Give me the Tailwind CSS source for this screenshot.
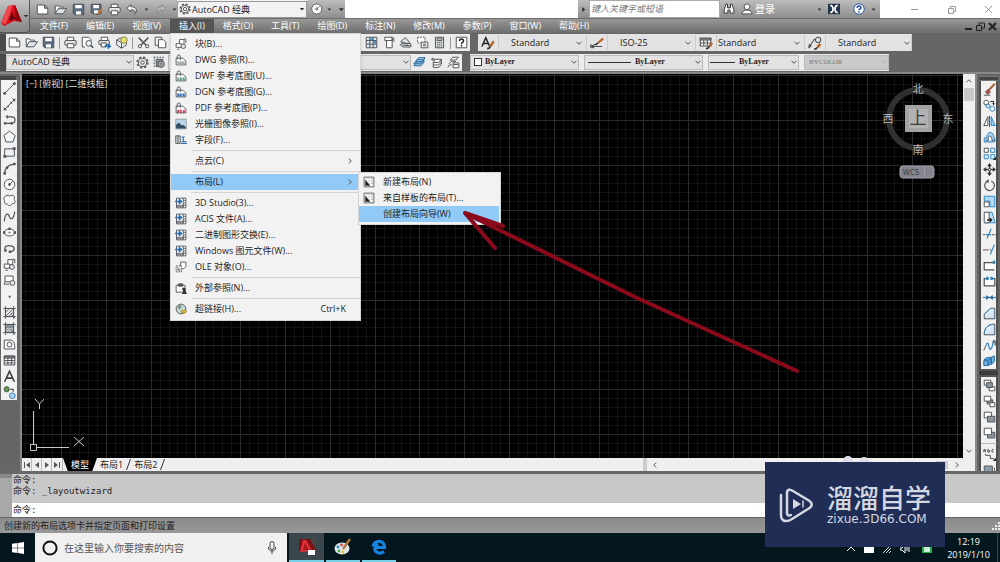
<!DOCTYPE html>
<html lang="zh-CN">
<head>
<meta charset="utf-8">
<meta name="viewport" content="width=device-width, initial-scale=1">
<title>AutoCAD 经典</title>
<script src="https://cdn.jsdelivr.net/npm/@tailwindcss/browser@4"></script>
</head>
<body class="h-screen overflow-hidden bg-[#666] font-['Open_Sans','Noto_Sans_CJK_SC',sans-serif] text-[9px] leading-4 text-[#222] [&_svg:has(use)]:fill-none [&_svg:has(use)]:stroke-[#505357] [&_svg:has(use)]:[stroke-width:1.2]">

<svg class="absolute size-0" aria-hidden="true">
  <defs>
    <linearGradient id="blueFade" x1="0" y1="0" x2="1" y2="1"><stop offset="0" stop-color="#fff"/><stop offset="1" stop-color="#b5d8f0"/></linearGradient>
  <!-- files -->
  <symbol id="new" viewBox="0 0 16 16"><path fill="#fff" d="M1.500 2.500h9l4 4v7h-13zM10.500 2.500v4h4"/></symbol>
  <symbol id="open" viewBox="0 0 16 16"><path fill="#fff" d="M1.500 13V3.500h4l1 1.500h5v2"/><path fill="#dde5ea" d="M1.500 13.300l3.500-6.300h10.500l-4.500 6.300z"/></symbol>
  <symbol id="save" viewBox="0 0 16 16"><path fill="#5b6b80" d="M1.500 1.500h13v13h-11l-2-2z"/><path fill="#fff" stroke="none" d="M4 2.500h8v4H4zM5 10h6v4H5z"/></symbol>
  <symbol id="saveas" viewBox="0 0 16 16"><path fill="#5b6b80" d="M1.500 1.500h12v12h-10l-2-2z"/><path fill="#fff" stroke="none" d="M4 2.500h7v4H4zM5 9h5v4H5z"/><path stroke="#c9782a" stroke-width="2.600" d="M14.500 7.500l-5 6"/><path stroke="#222" d="M9 14.500l.5-1"/></symbol>
  <symbol id="print" viewBox="0 0 16 16"><path fill="#fff" d="M4 6V1.500h8V6"/><rect x="1" y="5.500" width="14" height="6" rx="1.500" fill="#e3e3e3"/><path fill="#fff" d="M4 9.500h8v5H4z"/></symbol>
  <symbol id="preview" viewBox="0 0 16 16"><path fill="#fff" d="M5 13.500H1.500v-12h8l3 3V6"/><circle cx="9.500" cy="9" r="3.500" fill="#eef6fb"/><path stroke-width="2" d="M12 11.500l3 3"/></symbol>
  <symbol id="publish" viewBox="0 0 16 16"><path fill="#fff" d="M4 6V1.500h8V6"/><rect x="1" y="5.500" width="13" height="5" rx="1" fill="#e3e3e3"/><path fill="#fff" d="M4 8.500h6v5H4z"/><path stroke="#2576b8" stroke-width="2" d="M8 12.500h6M12 9.500l3 3-3 3"/></symbol>
  <symbol id="cube" viewBox="0 0 16 16"><path fill="#e9f1f6" d="M2 5l6-3 6 3v6l-6 4-6-4zM2 5l6 3 6-3M8 8v7"/><circle cx="11" cy="5" r="4" fill="#e8e06c" stroke="#8a8a50"/></symbol>
  <symbol id="cut" viewBox="0 0 16 16"><path stroke-width="1.800" d="M2 2l9 9M14 2L5 11"/><circle cx="3.500" cy="12.500" r="2"/><circle cx="12.500" cy="12.500" r="2"/></symbol>
  <symbol id="copydoc" viewBox="0 0 16 16"><path fill="#f6f6f6" d="M1.500 1.500h8v10h-8z"/><path fill="#fff" d="M5.500 4.500h6l3 3v7h-9z"/></symbol>
  <symbol id="undo" viewBox="0 0 16 16"><path fill="#f4f4f4" d="M6 2L1 6.500 6 11V8.500c4-.5 6 1 5 5 4-5 1-9-5-9z"/></symbol>
  <symbol id="redo" viewBox="0 0 16 16"><path fill="#b9b9b9" stroke="#8a8a8a" d="M10 2l5 4.500L10 11V8.500c-4-.5-6 1-5 5-4-5-1-9 5-9z"/></symbol>
  <symbol id="tri" viewBox="0 0 16 16"><path fill="#333" stroke="none" d="M2 5h12l-6 7z"/></symbol>
  <symbol id="gear" viewBox="0 0 16 16"><circle cx="8" cy="8" r="6.500" stroke-width="2" stroke-dasharray="2.800 2.300"/><circle cx="8" cy="8" r="5"/><circle cx="8" cy="8" r="2.200"/></symbol>
  <symbol id="wsset" viewBox="0 0 16 16"><path stroke-dasharray="2 1.500" d="M1 1.500h14M1.500 1v14"/><rect x="4" y="4" width="8" height="9" fill="#8a939a"/><circle cx="10" cy="10" r="4" fill="#a8b0b5"/><circle cx="10" cy="10" r="1.300" fill="#fff"/></symbol>
  <symbol id="gauge" viewBox="0 0 16 16"><circle cx="8" cy="8" r="7" fill="#fff"/><circle cx="8" cy="8" r="1.500"/><path d="M8 8l4-4"/></symbol>
  <symbol id="palette" viewBox="0 0 16 16"><path fill="#dce9f2" d="M1.500 1.500h13v13h-13zM6 1.500v13M10 1.500v13M1.500 5.500h13M1.500 10h13"/><path fill="#4a8fc0" stroke="none" d="M6.500 2h3v3h-3zM10.500 6h3v3.500h-3z"/></symbol>
  <symbol id="toolpal" viewBox="0 0 16 16"><path fill="#fff" d="M3.500 1.500h9v13h-7v-9h-2zM12.500 1.500v4h-7"/><path d="M14.500 2v5"/></symbol>
  <symbol id="sheet" viewBox="0 0 16 16"><path fill="#dfe5e8" d="M2 7l6-5 5 6-3 2zM1.500 10.500l4-2 9 1v4h-10z"/><path d="M4 11l9 1"/></symbol>
  <symbol id="markup" viewBox="0 0 16 16"><path fill="#fff" stroke-dasharray="2 1.300" d="M2 1.500h9v7H2z"/><path fill="#fff" d="M6.500 7.500h8v7h-8zM8.500 10h4M8.500 12h4"/></symbol>
  <symbol id="calc" viewBox="0 0 16 16"><path fill="#d7dcdf" d="M3 1.500h10v13H3z"/><path fill="#fff" d="M5 3.500h6v2H5z"/><path stroke-dasharray="1.500 1" d="M5 8h6M5 10.200h6M5 12.400h6"/></symbol>
  <symbol id="help" viewBox="0 0 16 16"><path fill="#fff" d="M1.500 1.500h13v13h-13z"/><path stroke="#222" stroke-width="1.800" d="M5.500 6c0-3 5-3 5 0 0 2-2.500 1.800-2.500 4M8 11.200v1.800"/></symbol>
  <symbol id="layers" viewBox="0 0 16 16"><path fill="#9cc8e6" stroke="#2f6f9e" d="M1 12l4-5h9l-4 5zM1 9.500l4-5h9l-4 5zM3 7l4-5h8l-4 5z"/></symbol>
  <symbol id="layprev" viewBox="0 0 16 16"><path d="M1 4h5M3.500 2v4"/><path fill="#fff" d="M4 8l3-4h7l-3 4zM4 8v3h7l3-4M4 11v3h7l3-4V4"/></symbol>
  <symbol id="laystate" viewBox="0 0 16 16"><path fill="#fff" d="M4 5l3-3.500h7L11 5zM2 10l3-3h6M1 14l2-3h3"/><path fill="#fff" d="M7.500 8.500h7v6h-7zM8 10.500h6"/></symbol>
  <symbol id="style-a" viewBox="0 0 16 16"><path stroke="#222" stroke-width="1.700" d="M1 12L5.500 2 10 12M3 8.500h5"/><path stroke="#b4632d" stroke-width="2.600" d="M14.500 6l-4 6"/><path stroke="#333" stroke-width="2" d="M7 14.500c2 0 3-1 3.500-2.500"/></symbol>
  <symbol id="style-d" viewBox="0 0 16 16"><path d="M1 9v5M1 12h13"/><path fill="#444" d="M1 12l3-1.500v3z"/><path stroke="#b4632d" stroke-width="2.600" d="M15 3L9 8"/><path stroke="#333" stroke-width="1.800" d="M5 10c2 0 3-.5 4-2"/></symbol>
  <symbol id="style-t" viewBox="0 0 16 16"><path fill="#fff" d="M1.500 2.500h12v9h-12z"/><path fill="#fff" d="M5.500 4v7M9.500 4v7M1.500 8h12"/><path fill="#8d9aa2" d="M1.500 2.500h12v2h-12z"/><path stroke="#b4632d" stroke-width="3" d="M15 8l-3.500 4"/><path stroke="#333" stroke-width="2" d="M8 14.500c2 0 3-1 3.500-2.500"/></symbol>
  <symbol id="style-m" viewBox="0 0 16 16"><path d="M1 13L7 4h2"/><circle cx="11.500" cy="4.500" r="3"/><path fill="#444" d="M1 13l.5-3 2 1.500z"/><path stroke="#b4632d" stroke-width="3" d="M14 9l-3 4"/><path stroke="#333" stroke-width="2" d="M7 15c2 0 3-.8 3.500-2"/></symbol>
  <symbol id="chev" viewBox="0 0 16 16"><path stroke-width="2" d="M3 5.500l5 5 5-5"/></symbol>
  <!-- draw -->
  <symbol id="line" viewBox="0 0 16 16"><path d="M2 14L14 2"/><path fill="#505357" d="M1 13h2v2H1zM13 1h2v2h-2z"/></symbol>
  <symbol id="xline" viewBox="0 0 16 16"><path d="M1 15L15 1"/><path fill="#505357" stroke="none" d="M1 15v-4l4 4zM15 1v4l-4-4zM5 9.500h2v2H5zM9 5h2v2H9z"/></symbol>
  <symbol id="pline" viewBox="0 0 16 16"><path stroke-width="1.500" d="M6 3.500h5c5 0 5 8 0 8H2"/><path fill="#505357" stroke="none" d="M6 1v5L3 3.500zM1 10h3v3H1zM9 10h3v3H9z"/></symbol>
  <symbol id="polygon" viewBox="0 0 16 16"><path fill="#f5f8fa" d="M8 1.500l7 5.200-2.700 8H3.700L1 6.700z"/></symbol>
  <symbol id="rect" viewBox="0 0 16 16"><path fill="#eef1f3" d="M2 3.500h12v9H2z"/><path fill="#505357" stroke="none" d="M.5 11H4v3.500H.5zM12 1.500h3.500V5H12z"/></symbol>
  <symbol id="arc" viewBox="0 0 16 16"><path stroke-width="1.500" d="M2 14C2 8 7 2.500 14 2.500"/><path fill="#505357" d="M1 13h2v2H1zM4 6h2v2H4zM13 1.500h2v2h-2z"/></symbol>
  <symbol id="circle" viewBox="0 0 16 16"><circle cx="8" cy="8" r="6.500" fill="#f7f9fa"/><path d="M8 8l4-4"/><circle cx="8" cy="8" r="1.200" fill="#505357"/></symbol>
  <symbol id="cloud" viewBox="0 0 16 16"><path fill="#f7f9fa" d="M5 2c2-1.500 3 0 3 1 2-3 7-1 6 2-1 2 0 2 1 4 0 3-3 3-4 3-1 3-5 3-6 0-3 1-4-2-3-4C0 6 1 2 5 2z"/></symbol>
  <symbol id="spline" viewBox="0 0 16 16"><path stroke-width="1.500" d="M1.500 14C3 1 7 5 8 8.500s5 4 6.500-6.500"/></symbol>
  <symbol id="ellipse" viewBox="0 0 16 16"><ellipse cx="8" cy="8" rx="6.500" ry="4.300" fill="#f7f9fa"/><path fill="#505357" stroke="none" d="M0 6.500h3v3H0zM13 6.500h3v3h-3zM6.500 2h3v3h-3z"/><circle cx="8" cy="8" r=".7"/></symbol>
  <symbol id="ellarc" viewBox="0 0 16 16"><path stroke-width="1.500" d="M3 10C0 5 7 3.500 11 5s4 6-2 7"/><path fill="#505357" stroke="none" d="M1.500 9h3v3h-3zM7 10.500h3v3H7z"/></symbol>
  <symbol id="insblk" viewBox="0 0 16 16"><path fill="#fff" d="M6 2h6v7H6z"/><path fill="#fff" d="M1.500 7.500h7v5h-7z"/><circle cx="11" cy="11" r="3" fill="#e4e8ea"/><path d="M3 15h3M12 1.500h2.500v5"/></symbol>
  <symbol id="mkblk" viewBox="0 0 16 16"><path fill="#fff" d="M2.500 2.500h10v7h-10zM2.500 9.500l-1 3h6"/><circle cx="11.500" cy="11" r="3" fill="#e4e8ea"/></symbol>
  <symbol id="point" viewBox="0 0 16 16"><rect x="7" y="7" width="2.400" height="2.400" fill="#505357" stroke="none"/></symbol>
  <symbol id="hatch" viewBox="0 0 16 16"><path fill="#dfe3e5" d="M3 3h10v10H3z"/><path d="M0 3h16M0 13h16M3 0v16M13 0v16M4 7l3-3M4 12l8-8M8 12l4-4M10 10l5 5" stroke-width="1"/></symbol>
  <symbol id="grad" viewBox="0 0 16 16"><path fill="#888f94" d="M3 3h10v10H3z"/><path stroke="#d8dcdf" d="M4 11h8M4 8.500h8"/><path d="M0 3h16M0 13h16M3 0v16M13 0v16M10 10l5 5" stroke-width="1"/></symbol>
  <symbol id="region" viewBox="0 0 16 16"><path fill="#f7f9fa" d="M1.500 2.500h8c4 1 5 4 5 11h-13z"/><circle cx="8" cy="8" r="3"/></symbol>
  <symbol id="table" viewBox="0 0 16 16"><path fill="#fff" d="M1.500 2.500h13v11h-13zM1.500 8h13M1.500 11h13M6 5v8M10.500 5v8"/><path fill="#7d858a" d="M1.500 2.500h13v2.500h-13z"/></symbol>
  <symbol id="mtext" viewBox="0 0 16 16"><path stroke="#3f4245" stroke-width="2" d="M2 14.500L8 1.500l6 13M4.500 10h7"/></symbol>
  <symbol id="addsel" viewBox="0 0 16 16"><circle cx="4.500" cy="4" r="3.200" fill="#5a9a42"/><circle cx="11.500" cy="12" r="3.500" fill="#a9d3ee" stroke="#3f83b4"/><path stroke="#222" d="M9 4h3.500v3"/></symbol>
  <!-- modify -->
  <symbol id="erase" viewBox="0 0 16 16"><path stroke="#a9653a" stroke-width="2.600" d="M14.500 1L7 9"/><path fill="#d34b43" d="M3 11l3-3 3 3-3 3z"/><path d="M1 15h8"/></symbol>
  <symbol id="copy" viewBox="0 0 16 16"><circle cx="4" cy="4.500" r="3" fill="#fff"/><circle cx="11.500" cy="12" r="3" fill="#fff" stroke="#2e86c8"/><circle cx="6" cy="8.500" r="2.500" stroke="#2e86c8"/><path stroke="#222" d="M9 3h4v4M11.500 5.500L13 7l1.500-1.500"/></symbol>
  <symbol id="mirror" viewBox="0 0 16 16"><path fill="#fff" d="M6 2v11H1z"/><path fill="#9fd0f2" stroke="#2e86c8" d="M10 2v11h5z"/><path d="M8 1v14"/></symbol>
  <symbol id="offset" viewBox="0 0 16 16"><path stroke="#2e86c8" d="M1.500 13.500v-5h3c0-9 9-9 9 0h1v5z" fill="#a8d5f3"/><path fill="#fff" d="M3.500 11.500h3c-1-7 5-7 4.500 0h4"/></symbol>
  <symbol id="array" viewBox="0 0 16 16"><path fill="#fff" d="M1.500 1.500h5v5h-5z"/><path fill="#e3f2fc" stroke="#2e86c8" d="M9.500 1.500h5v5h-5zM1.500 9.500h5v5h-5zM9.500 9.500h5v5h-5z"/><path fill="#222" stroke="none" d="M16 12v4h-4z"/></symbol>
  <symbol id="move" viewBox="0 0 16 16"><path stroke="#333" stroke-width="1.500" d="M8 2v12M2 8h12"/><path fill="#333" stroke="none" d="M8 0l3 4H5zM8 16l3-4H5zM0 8l4-3v6zM16 8l-4-3v6z"/><path fill="#fff" d="M6.500 6.500h3v3h-3z"/></symbol>
  <symbol id="rotate" viewBox="0 0 16 16"><path stroke-width="1.500" d="M5 3a6 6 0 1 0 5-.5"/><path fill="#505357" stroke="none" d="M7 0v5L3 3z"/></symbol>
  <symbol id="scale" viewBox="0 0 16 16"><path fill="#b2daf5" stroke="#2e86c8" d="M1.500 1.500h13v13h-6v-7h-7z"/><path fill="#fff" d="M1.500 8.500h6v6h-6z"/></symbol>
  <symbol id="stretch" viewBox="0 0 16 16"><path fill="#c4e2f6" stroke="#2e86c8" d="M7 1.500h4l4 13H2"/><path fill="#fff" d="M1.500 1.500h6v13h-6z"/><path stroke="#222" stroke-width="1.800" d="M5 11h5M8.500 9l2 2-2 2"/></symbol>
  <symbol id="trim" viewBox="0 0 16 16"><path d="M0 9.500h5M11 9.500h5" stroke-dasharray="3 1"/><path stroke="#2e86c8" stroke-width="1.500" d="M5 14l5-12M4 9.500h6"/></symbol>
  <symbol id="extend" viewBox="0 0 16 16"><path d="M0 8.500h5"/><path stroke-dasharray="2 1.200" d="M5 8.500h6"/><path stroke="#2e86c8" stroke-width="1.500" d="M9 14l5-12"/></symbol>
  <symbol id="breakpt" viewBox="0 0 16 16"><path fill="#fff" stroke-width="1.500" d="M13 4.500H1.500v9H14"/><path fill="#2e86c8" stroke="none" d="M12 2h3v4h-3z"/></symbol>
  <symbol id="break" viewBox="0 0 16 16"><path fill="#fff" stroke-width="1.500" d="M5 4.500H1.500v9h13v-9H11"/><path fill="#2e86c8" stroke="none" d="M4 2h3v4H4zM9 2h3v4H9z"/></symbol>
  <symbol id="join" viewBox="0 0 16 16"><path stroke="#2e86c8" stroke-width="1.500" d="M0 8h16"/><path fill="#26669a" stroke="none" d="M4 5l4 3-4 3zM12 5L8 8l4 3z"/></symbol>
  <symbol id="chamfer" viewBox="0 0 16 16"><path fill="url(#blueFade)" d="M1.500 14.500V9l8-7.500h5v13z"/><path stroke="#2e86c8" d="M1.500 9l8-7.500"/></symbol>
  <symbol id="fillet" viewBox="0 0 16 16"><path fill="url(#blueFade)" d="M1.500 14.500C1.500 6 6 1.500 14.500 1.500v13z"/><path stroke="#2e86c8" d="M1.500 13C2 6 6 2 13 1.500"/></symbol>
  <symbol id="blend" viewBox="0 0 16 16"><path d="M1 14l3-7"/><path stroke="#2e86c8" stroke-width="1.500" d="M4 7c4-7 2 9 6 5 2-2 1-5 3-8"/><path stroke-width="1.600" d="M12 5l2-4M15 2v6"/></symbol>
  <symbol id="explode" viewBox="0 0 16 16"><path fill="#6fb3e0" stroke="#1f6ba6" d="M1 6l4-3h5l-3 3zM1 7h5v6H1zM7 7l3-3v6l-3 3zM10 3l4-2v7l-4 4z"/></symbol>
  <symbol id="front" viewBox="0 0 16 16"><path fill="#fff" d="M1.500 1.500h8v6h-8zM7.500 9.500h7v5h-7z"/><path fill="#8d969c" d="M4.500 4.500h7v6h-7z"/></symbol>
  <symbol id="back" viewBox="0 0 16 16"><path fill="#8d969c" d="M5 6h7v5H5z"/><path fill="#fff" d="M1.500 1.500h8v6h-8zM8.500 9.500h6v5h-6z"/></symbol>
  <symbol id="above" viewBox="0 0 16 16"><path fill="#fff" d="M1.500 1.500h9v7h-9z"/><path fill="#8d969c" d="M5.500 6.500h9v7h-9z"/></symbol>
  <symbol id="under" viewBox="0 0 16 16"><path fill="#8d969c" d="M5.500 6.500h9v7h-9z"/><path fill="#fff" d="M1.500 1.500h9v8h-9z"/></symbol>
  <symbol id="abc" viewBox="0 0 16 16"><path d="M1 5V2h2v3M1 4h2M6 1v4h2V3H6M13 2h-2v3h2M9 9H3v-2M9 9v4h5"/><path fill="#222" stroke="none" d="M16 12v4h-4z"/></symbol>
  <symbol id="hback" viewBox="0 0 16 16"><path fill="#8d9fae" d="M1.500 2.500h10v8h-10z"/><path d="M4 13.500h10v-9"/></symbol>
  <!-- menu -->
  <symbol id="dwg" viewBox="0 0 16 16"><path fill="#fff" d="M1.500 5.500h9l4 4v5h-13z"/><path d="M3 7V3c0-2.500 4-2.500 4 0v5"/><path fill="#a9afb3" stroke="none" d="M3 10h10v4H3z"/></symbol>
  <symbol id="dwf" viewBox="0 0 16 16"><path fill="#fff" d="M1.500 5.500h9l4 4v5h-13z"/><path d="M3 7V3c0-2.500 4-2.500 4 0v5"/><path fill="#5e9c86" stroke="none" d="M3 10h2v4H3zM6 10h3v4H6zM10 10h3v4h-3z"/></symbol>
  <symbol id="dgn" viewBox="0 0 16 16"><path fill="#fff" d="M1.500 5.500h9l4 4v5h-13z"/><path d="M3 7V3c0-2.500 4-2.500 4 0v5"/><path fill="#2f6fb0" stroke="none" d="M3 10h2.500v4H3zM6 10h3v4H6zM10 10h3v4h-3z"/></symbol>
  <symbol id="pdf" viewBox="0 0 16 16"><path fill="#fff" d="M1.500 5.500h9l4 4v5h-13z"/><path d="M3 7V3c0-2.500 4-2.500 4 0v5"/><path stroke="#c2273a" d="M3.500 15v-4h2v2h-2M7.500 10.500v4c2 0 2-4 0-4M11.500 15v-4h2M11.500 13h2"/></symbol>
  <symbol id="img" viewBox="0 0 16 16"><path fill="#bcd6ea" stroke="#8b98a2" d="M1 1.500h14v13H1z"/><path fill="#344d63" stroke="none" d="M1.500 14V9l4-3 3 4 2-1 4 3v2z"/></symbol>
  <symbol id="field" viewBox="0 0 16 16"><path fill="#d3dbe0" d="M1 2.500h6v10H1zM4 2.500v10"/><path stroke="#2c6db0" stroke-width="1.500" d="M9 4h4M11 4v6M9 10h6M8 12.500h8"/></symbol>
  <symbol id="import" viewBox="0 0 16 16"><path fill="#fff" d="M2 1.500h12.500v13H2zM11 1.500v13M2 11h12M11 4.500h3M11 8h3"/><path stroke="#236fb3" stroke-width="2.200" d="M0 6h7M5 3l3.500 3L5 9"/><path stroke-dasharray="2 1" stroke-width="2" d="M3 13h8"/></symbol>
  <symbol id="ole" viewBox="0 0 16 16"><path fill="#fff" d="M7.500 1.500h7v6l-3 3h-4z"/><path stroke-dasharray="2 1.300" fill="#e6e6e6" d="M1.500 6.500h7v8h-7z"/><path d="M4 9v3h3"/></symbol>
  <symbol id="xref" viewBox="0 0 16 16"><path fill="#fff" d="M1.500 4.500h12v9h-12z"/><path fill="#505357" d="M4.500 2.500h6v3h-6z"/><path fill="#333" stroke="none" d="M9 9l3-2 2 2v3l2 4H9l2-4z"/></symbol>
  <symbol id="hyper" viewBox="0 0 16 16"><circle cx="8" cy="8" r="6.500" fill="#c8dcd6"/><path fill="#7a9a8f" stroke="none" d="M3 5l4-3 2 3-3 4z"/><path fill="#f0c63f" stroke="#9a7a25" d="M8 12l2-3 1 1.500 3-1.500 1 3-3 2z"/></symbol>
  <symbol id="layout" viewBox="0 0 16 16"><path fill="#fff" d="M1.500 1.500h13v13h-13z"/><path stroke-dasharray="1.500 1.500" stroke="#8c9499" d="M5 3v6M8 3v9M11 3v9M13 3v9"/><path fill="#222" stroke="none" d="M3 5v8h7z"/></symbol>
  </defs>
</svg>

<div class="flex h-full flex-col">

  <!-- title bar and menu bar -->
  <header class="flex h-[33px] shrink-0 bg-[#777]">
    <button aria-label="应用程序菜单" class="flex w-[30px] shrink-0 items-center justify-center rounded-br-sm border-r border-b border-[#555] bg-linear-to-b from-[#c4c4c4] to-[#858585]">
      <svg class="size-6" viewBox="0 0 24 24"><path fill="#d4101c" d="M8 2l7-1 7 17-8-1-10 5-3-3z"/><path fill="#ef4a50" d="M8 2l5-1L6 20l-5-1z"/><path fill="#8c0610" d="M15 1l7 17-7-2z"/><path fill="#5c060c" d="M12 8l3 7-6 2z"/></svg>
      <svg class="-ml-px size-[6px]"><use href="#tri"/></svg>
    </button>
    <div class="flex min-w-0 flex-1 flex-col">
      <div class="flex h-[18px] shrink-0 bg-white">
        <div class="flex items-center gap-[5px] bg-linear-to-b from-[#bdbdbd] to-[#8e8e8e] pl-[6px]" data-qat="new open save saveas print undo tri redo tri"></div>
        <label class="grid w-[130px] items-center bg-[#f2f2f2]">
          <svg class="ml-[2px] size-3 [grid-area:1/1]"><use href="#gear"/></svg>
          <select aria-label="工作空间" class="h-[17px] w-full appearance-none border border-[#999] bg-transparent pl-[14px] text-[9px] leading-4 [grid-area:1/1]"><option>AutoCAD 经典</option></select>
          <svg class="mr-[2px] size-[6px] justify-self-end [grid-area:1/1]"><use href="#tri"/></svg>
        </label>
        <div class="flex w-[38px] items-center gap-1 bg-linear-to-b from-[#bdbdbd] to-[#8e8e8e] pl-1">
          <svg class="size-3"><use href="#gauge"/></svg><svg class="size-[5px]"><use href="#tri"/></svg><svg class="ml-[3px] size-[7px]"><use href="#tri"/></svg>
        </div>
        <div class="flex-1"></div>
        <div class="flex w-[302px] bg-linear-to-b from-[#bdbdbd] to-[#8e8e8e]">
          <button aria-label="展开" class="flex w-[11px] items-center justify-center"><svg class="size-[7px] -rotate-90"><use href="#tri"/></svg></button>
          <input aria-label="搜索" placeholder="键入关键字或短语" class="w-[131px] border border-[#aaa] bg-white px-px text-[9px] italic placeholder:text-[#777]">
          <div class="flex flex-1 items-center pr-1 pl-[3px] text-white">
            <svg class="size-3" viewBox="0 0 16 16"><path fill="#fff" stroke="#333" stroke-width="1.300" d="M4 1.500h2v5h4v-5h2l2.500 7v5h-5v-4h-3v4h-5v-5z"/></svg>
            <svg class="ml-[6px] size-3" viewBox="0 0 16 16"><circle cx="8" cy="5" r="3.800" fill="#fff" stroke="#444" stroke-width="1.200"/><path fill="#fff" stroke="#444" stroke-width="1.200" d="M1.500 14.500c0-3 2-4 4-5h5c2 1 4 2 4 5z"/></svg>
            <span class="ml-[2px] text-[10px]">登录</span>
            <svg class="mr-[6px] ml-auto size-[5px]"><use href="#tri"/></svg>
            <svg class="size-3" viewBox="0 0 16 16"><path fill="#24364b" d="M0 1h16v14H0z"/><path fill="none" stroke="#fff" stroke-width="2.200" d="M3 3c5 1 5 9 0 10M13 3c-5 1-5 9 0 10"/></svg>
            <svg class="ml-[13px] size-3" viewBox="0 0 16 16"><circle cx="8" cy="8" r="7" fill="#fff" stroke="#2c56a0" stroke-width="1.300"/><path fill="none" stroke="#2450a4" stroke-width="2" d="M5.500 6.500c0-3.500 5-3.500 5 0 0 1.500-2.500 1.500-2.500 3M8 11v2"/></svg>
            <svg class="ml-[6px] size-[5px]"><use href="#tri"/></svg>
          </div>
        </div>
        <div class="flex w-[120px] items-center justify-between pr-[7px] pl-[30px]">
          <button aria-label="最小化"><svg class="size-[9px]" viewBox="0 0 9 9" fill="none" stroke="#999"><path d="M1 4.500h7"/></svg></button>
          <button aria-label="还原"><svg class="size-[9px]" viewBox="0 0 9 9" fill="none" stroke="#999"><path d="M1.500 3.500h5v5h-5zM3.500 3V1.500h5v5H7"/></svg></button>
          <button aria-label="关闭"><svg class="size-[9px]" viewBox="0 0 9 9" fill="none" stroke="#999"><path d="M1 1l7 7M8 1L1 8"/></svg></button>
        </div>
      </div>

      <nav class="flex h-[15px] items-stretch border-t border-[#6d6d6d] bg-linear-to-b from-[#989898] to-[#6e6e6e] leading-[14px] text-white">
        <button class="ml-px px-[9px]">文件(F)</button><button class="px-[9px]">编辑(E)</button><button class="px-[9px]">视图(V)</button>
        <div class="relative flex">
          <button class="bg-[#555] px-[9px]" aria-expanded="true">插入(I)</button>
          <div role="menu" class="absolute top-full left-0 z-20 w-[191px] border border-[#d5d5d5] bg-[#f2f2f2] pt-[2px] pb-[3px] text-[#222] shadow-md" data-menu></div>
        </div>
        <button class="px-[9px]">格式(O)</button><button class="px-[9px]">工具(T)</button><button class="px-[9px]">绘图(D)</button><button class="px-[9px]">标注(N)</button><button class="px-[9px]">修改(M)</button><button class="px-[9px]">参数(P)</button><button class="px-[9px]">窗口(W)</button><button class="px-[9px]">帮助(H)</button>
        <div class="ml-auto flex items-center gap-[3px] pr-[3px]">
          <button aria-label="最小化图形"><svg class="size-[9px]" viewBox="0 0 9 9"><path stroke="#222" stroke-width="2" d="M1 7h7"/></svg></button>
          <button aria-label="还原图形"><svg class="size-[9px]" viewBox="0 0 9 9" fill="none" stroke="#222"><path d="M.5 3.500h5v5h-5zM3 3V1h5.500v5H6"/></svg></button>
          <button aria-label="关闭图形"><svg class="size-[9px]" viewBox="0 0 9 9"><path stroke="#222" stroke-width="2" d="M1 1l7 7M8 1L1 8"/></svg></button>
        </div>
      </nav>
    </div>
  </header>

  <!-- toolbars -->
  <div class="flex h-[19px] shrink-0 items-center gap-2">
    <div class="flex h-[17px] w-[470px] items-center border-l-[6px] border-[#4a4a4a] bg-[#ececec]">
      <div class="flex items-center" data-icons="new open save | print preview publish cube | cut copydoc"></div>
      <div class="ml-auto flex items-center" data-icons="palette toolpal sheet markup calc | help"></div>
    </div>
    <div class="flex h-[17px] items-center bg-[#e4e4e4]">
      <div class="flex w-[109px] items-center"><span class="flex w-5 justify-center"><svg class="size-[14px]"><use href="#style-a"/></svg></span><label class="grid flex-1 items-center"><select aria-label="文字样式" class="h-[15px] w-full appearance-none border-x border-[#ccc] bg-[#e2e2e2] pl-3 text-[9px] [grid-area:1/1]"><option>Standard</option></select><svg class="mr-1 size-2 justify-self-end [grid-area:1/1]"><use href="#chev"/></svg></label></div>
      <div class="flex w-[109px] items-center"><span class="flex w-5 justify-center"><svg class="size-[14px]"><use href="#style-d"/></svg></span><label class="grid flex-1 items-center"><select aria-label="标注样式" class="h-[15px] w-full appearance-none border-x border-[#ccc] bg-[#e2e2e2] pl-3 text-[9px] [grid-area:1/1]"><option>ISO-25</option></select><svg class="mr-1 size-2 justify-self-end [grid-area:1/1]"><use href="#chev"/></svg></label></div>
      <div class="flex w-[109px] items-center"><span class="flex w-5 justify-center"><svg class="size-[14px]"><use href="#style-t"/></svg></span><label class="grid flex-1 items-center"><select aria-label="表格样式" class="h-[15px] w-full appearance-none border-x border-[#ccc] bg-[#e2e2e2] pl-px text-[9px] [grid-area:1/1]"><option>Standard</option></select><svg class="mr-1 size-2 justify-self-end [grid-area:1/1]"><use href="#chev"/></svg></label></div>
      <div class="flex w-[107px] items-center"><span class="flex w-5 justify-center"><svg class="size-[14px]"><use href="#style-m"/></svg></span><label class="grid flex-1 items-center"><select aria-label="多重引线样式" class="h-[15px] w-full appearance-none border-x border-[#ccc] bg-[#e2e2e2] pl-3 text-[9px] [grid-area:1/1]"><option>Standard</option></select><svg class="mr-px size-2 justify-self-end [grid-area:1/1]"><use href="#chev"/></svg></label></div>
    </div>
  </div>
  <div class="flex h-5 shrink-0 items-center gap-2">
    <div class="flex h-[17px] w-[462px] items-center border-l-[6px] border-[#4a4a4a] bg-[#ececec]">
      <label class="grid w-[128px] items-center bg-[#e2e2e2]"><select aria-label="工作空间工具栏" class="h-[15px] w-full appearance-none border border-[#bbb] bg-transparent pl-[5px] text-[9px] leading-3 [grid-area:1/1]"><option>AutoCAD 经典</option></select><svg class="mr-px size-2 justify-self-end [grid-area:1/1]"><use href="#chev"/></svg></label>
      <div class="flex items-center" data-icons="gear wsset"></div>
      <label class="grid flex-1 items-center bg-[#e2e2e2]"><select aria-label="图层" class="h-[15px] w-full appearance-none border border-[#bbb] bg-transparent text-[9px] [grid-area:1/1]"><option></option></select><svg class="mr-px size-2 justify-self-end [grid-area:1/1]"><use href="#chev"/></svg></label>
      <div class="flex items-center" data-icons="layers layprev laystate"></div>
    </div>
    <div class="flex h-[17px] items-center gap-[5px] bg-[#ececec] font-['Liberation_Serif','Noto_Sans_CJK_SC',serif] font-bold">
      <label class="grid w-[109px] items-center bg-[#e2e2e2]"><span class="ml-1 size-2 border border-[#333] bg-white [grid-area:1/1]"></span><select aria-label="颜色" class="h-[15px] w-full appearance-none border border-[#bbb] bg-transparent pl-[14px] text-[8px] leading-3 [grid-area:1/1]"><option>ByLayer</option></select><svg class="mr-px size-2 justify-self-end [grid-area:1/1]"><use href="#chev"/></svg></label>
      <label class="grid w-[119px] items-center bg-[#e2e2e2]"><span class="ml-1 h-px w-[43px] bg-[#333] [grid-area:1/1]"></span><select aria-label="线型" class="h-[15px] w-full appearance-none border border-[#bbb] bg-transparent pl-[50px] text-[8px] leading-3 [grid-area:1/1]"><option>ByLayer</option></select><svg class="mr-px size-2 justify-self-end [grid-area:1/1]"><use href="#chev"/></svg></label>
      <label class="grid w-[91px] items-center bg-[#e2e2e2]"><span class="ml-[2px] h-px w-[25px] bg-[#333] [grid-area:1/1]"></span><select aria-label="线宽" class="h-[15px] w-full appearance-none border border-[#bbb] bg-transparent pl-[30px] text-[8px] leading-3 [grid-area:1/1]"><option>ByLayer</option></select><svg class="mr-px size-2 justify-self-end [grid-area:1/1]"><use href="#chev"/></svg></label>
      <label class="grid w-[85px] items-center bg-[#c9c9c9]"><select disabled aria-label="打印样式" class="h-[15px] w-full appearance-none border border-[#bbb] bg-transparent pl-1 text-[7px] leading-3 font-normal text-[#777] [grid-area:1/1]"><option>BYCOLOR</option></select><svg class="mr-px size-2 justify-self-end opacity-20 [grid-area:1/1]"><use href="#chev"/></svg></label>
    </div>
  </div>

  <!-- work area -->
  <main class="flex min-h-0 flex-1 border-t-2 border-[#888]">
    <aside class="flex w-[22px] shrink-0 flex-col border-r-2 border-[#8a8a8a] pt-[2px]">
      <div class="mr-1 h-1 bg-[#444]"></div>
      <div class="ml-px flex w-4 flex-col bg-[#f1f1f1]" data-icons="line xline pline polygon rect arc circle cloud spline ellipse ellarc insblk mkblk point hatch grad region table mtext addsel"></div>
    </aside>

    <div class="flex min-w-0 flex-1 flex-col">
      <div class="flex min-h-0 flex-1">
        <section class="relative min-w-0 flex-1 overflow-hidden bg-black" aria-label="绘图区">
          <svg class="absolute inset-0 h-full w-full" shape-rendering="crispEdges"><path id="minor" stroke="#121212"/><path id="major" stroke="#2b2b2b"/></svg>
          <p class="absolute top-[2px] left-1 leading-4 text-[#ddd]">[−] [俯视] [二维线框]</p>
          <svg class="absolute bottom-0 left-2 h-[60px] w-[58px]" viewBox="0 0 58 60" fill="none" stroke="#c8c8c8"><path d="M3.500 13v33M7 49.500h32M.500 46.500h6v6h-6zM5 1l4.500 5L14 1M9.500 6v5M44 39l10 9M54 39l-10 9"/></svg>
          <svg class="absolute top-2 right-[10px] h-[100px] w-[72px]" viewBox="0 0 72 100" font-family="Noto Sans CJK SC,sans-serif" text-anchor="middle">
            <circle cx="37" cy="37" r="29" fill="none" stroke="#303030" stroke-width="6"/>
            <path fill="#a3a3a3" d="M24 23h27v27H24z"/>
            <path fill="#b2b2b2" d="M28 27h19v19H28z"/>
            <g fill="#b5b5b5" font-size="11"><text x="37" y="11">北</text><text x="37" y="72">南</text><text x="7" y="41">西</text><text x="67" y="41">东</text></g>
            <text x="37" y="42" font-size="17" fill="#3c3c3c">上</text>
            <rect x="19" y="84" width="34" height="12" rx="3" fill="#85858d" stroke="#a2a2aa"/>
            <text x="30" y="93" font-size="8" fill="#3d3d42">WCS</text><path stroke="#9c9ca4" d="M43.500 85v10"/>
          </svg>
        </section>
        <div class="flex w-3 shrink-0 flex-col items-center bg-[#efefef] py-[3px]">
          <svg class="size-2 rotate-180"><use href="#chev"/></svg>
          <div class="mt-[3px] h-[13px] w-[10px] bg-[#c8c8c8]"></div>
          <svg class="mt-auto size-2"><use href="#chev"/></svg>
        </div>
      </div>
      <div class="flex h-[13px] shrink-0 items-stretch bg-[#efefef] leading-[13px]">
        <div class="flex divide-x divide-[#bbb] border-r border-[#bbb]">
          <button aria-label="第一个" class="flex w-[10px] items-center justify-center"><svg class="size-[6px]" viewBox="0 0 6 6"><path fill="#555" d="M0 0h1v6H0zM6 0v6L2 3z"/></svg></button>
          <button aria-label="上一个" class="flex w-[10px] items-center justify-center"><svg class="size-[6px]" viewBox="0 0 6 6"><path fill="#555" d="M5 0v6L1 3z"/></svg></button>
          <button aria-label="下一个" class="flex w-[10px] items-center justify-center"><svg class="size-[6px]" viewBox="0 0 6 6"><path fill="#555" d="M1 0v6l4-3z"/></svg></button>
          <button aria-label="最后一个" class="flex w-[10px] items-center justify-center"><svg class="size-[6px]" viewBox="0 0 6 6"><path fill="#555" d="M0 0v6l4-3zM5 0h1v6H5z"/></svg></button>
        </div>
        <button class="bg-black px-2 text-white [clip-path:polygon(0_0,100%_0,86%_100%,14%_100%)]">模型</button>
        <button class="px-[3px]">布局1</button>
        <svg class="h-[13px] w-[5px]" viewBox="0 0 5 13"><path stroke="#333" d="M4.500 1L.5 12"/></svg>
        <button class="px-[3px]">布局2</button>
        <svg class="h-[13px] w-[5px]" viewBox="0 0 5 13"><path stroke="#333" d="M4.500 1L.5 12"/></svg>
        <div class="ml-auto flex w-[332px] items-center border-l-4 border-[#ccc] pr-[14px] pl-1">
          <svg class="size-2 rotate-90"><use href="#chev"/></svg>
          <div class="mr-[5px] ml-auto h-2 w-3 bg-[#ccc]"></div>
          <svg class="size-2 -rotate-90"><use href="#chev"/></svg>
        </div>
      </div>
    </div>

    <aside class="flex w-[25px] shrink-0 flex-col overflow-hidden border-l-2 border-[#8a8a8a] px-[2px] pt-[2px]">
      <div class="h-[5px] shrink-0 border-y border-[#777] bg-[#444]"></div>
      <div class="flex flex-col border-x-2 border-[#505050] bg-[#f1f1f1]" data-icons="erase copy mirror offset array move rotate scale stretch trim extend breakpt break join chamfer fillet blend explode"></div>
      <div class="h-2 shrink-0 border-y-2 border-[#555] bg-[#3c3c3c]"></div>
      <div class="flex flex-col border-x-2 border-[#505050] bg-[#f1f1f1]" data-icons="front back above under - abc hback"></div>
    </aside>
  </main>

  <!-- command window -->
  <section class="flex h-[46px] shrink-0 border-t-[3px] border-[#686868] bg-[#a8a8a8] font-['DejaVu_Sans_Mono','Noto_Sans_CJK_SC',monospace]">
    <div class="w-3 shrink-0 border-t-4 border-[#8a8a8a]"></div>
    <div class="flex flex-1 flex-col bg-[#c8c8c8]">
      <div class="flex-1 pt-px pl-px leading-[11px]"><p>命令:</p><p>命令: _layoutwizard</p></div>
      <label class="flex h-[14px] items-center bg-white pl-px">命令:<input aria-label="命令" class="h-3 flex-1 outline-none"></label>
    </div>
  </section>

  <footer class="flex h-4 shrink-0 items-center justify-between border-t border-[#666] bg-linear-to-b from-[#8b8b8b] to-[#999] pl-1">
    <span>创建新的布局选项卡并指定页面和打印设置</span>
    <svg class="size-2" viewBox="0 0 8 8" fill="#eee"><path d="M6 0h2v2H6zM3 3h2v2H3zM6 3h2v2H6zM0 6h2v2H0zM3 6h2v2H3zM6 6h2v2H6z"/></svg>
  </footer>

  <!-- taskbar -->
  <div class="flex h-[29px] shrink-0 items-stretch bg-[#05171e]">
    <button aria-label="开始" class="flex w-[35px] items-center justify-center"><svg class="size-3" viewBox="0 0 12 12" fill="#fff"><path d="M0 1.800l5.500-.8v4.700H0zM6 .9L12 0v5.700H6zM0 6.300h5.500V11L0 10.200zM6 6.300h6V12l-6-.9z"/></svg></button>
    <label class="flex w-[252px] items-center bg-[#f0f0f0] pl-[7px]">
      <svg class="size-4" viewBox="0 0 16 16"><circle cx="8" cy="8" r="6.600" fill="none" stroke="#111" stroke-width="2"/></svg>
      <input aria-label="搜索" placeholder="在这里输入你要搜索的内容" class="ml-[6px] min-w-0 flex-1 text-[10px] placeholder:text-[#555]">
      <svg class="mr-[9px] h-[13px] w-3" viewBox="0 0 12 13" fill="none" stroke="#444"><rect x="4" y=".5" width="4" height="8" rx="2"/><path d="M2.500 6v1c0 4 7 4 7 0V6M6 10v3"/></svg>
    </label>
    <button aria-label="AutoCAD" class="ml-[2px] flex w-[35px] items-center justify-center border-b-2 border-[#76d0e8] bg-[#3a474c]"><svg class="size-[18px]" viewBox="0 0 18 18"><path fill="#7d1118" d="M1 1h16v12H1z"/><path fill="#e0303a" d="M2 14L5 2h3l6 11z"/><path fill="#4a4a4a" d="M12 1h5v9z"/><path fill="#fff" d="M10 12h7v5h-7z"/><path fill="#a6141d" d="M5 12L7 5l4 7z"/></svg></button>
    <button aria-label="画图" class="ml-[2px] flex w-[34px] items-center justify-center border-b-2 border-[#76d0e8]"><svg class="size-[18px]" viewBox="0 0 18 18"><ellipse cx="8" cy="10.500" rx="7.500" ry="6" fill="#dde8ef"/><circle cx="4" cy="9" r="1.400" fill="#2d8bd0"/><circle cx="7.500" cy="7" r="1.400" fill="#d8423a"/><circle cx="5" cy="13" r="1.400" fill="#4aa64a"/><circle cx="9" cy="14" r="1.400" fill="#e7b92d"/><path stroke="#b77a35" stroke-width="2.400" d="M16 1L9 11"/></svg></button>
    <button aria-label="Edge" class="ml-[2px] flex w-[34px] items-center justify-center border-b-2 border-[#76d0e8]"><svg class="size-4" viewBox="0 0 16 16"><path fill="none" stroke="#1684e0" stroke-width="3.200" d="M2 7.500C3 .5 14 .5 13.500 8.500H5M13 12.500C9 15.500 3.500 14 4 9c.3-2 1.500-3 3-4"/></svg></button>
    <div class="ml-auto flex items-end gap-2 pr-[10px] pb-2">
      <svg class="size-[10px]" viewBox="0 0 10 10" fill="none" stroke="#fff"><path d="M1 7l4-4 4 4"/></svg>
      <svg class="size-[10px]" viewBox="0 0 10 10"><path fill="#fff" d="M0 3h10v6H0z"/></svg>
      <svg class="size-[10px]" viewBox="0 0 10 10" fill="none" stroke="#ddd"><path d="M1 9l8-8M4 9l5-5M7 9l2-2"/></svg>
      <svg class="size-[10px]" viewBox="0 0 10 10" fill="none" stroke="#fff"><path d="M0 4h2l3-3v8L2 6H0zM7 3v4M9 2v6"/></svg>
      <svg class="ml-1 size-[10px]" viewBox="0 0 10 10"><path fill="#21b04b" d="M0 1h10v8H0z"/><path fill="none" stroke="#fff" stroke-width="1.500" d="M8 3H3v2h4v2H2"/></svg>
    </div>
    <div class="mr-[2px] flex w-[56px] flex-col items-center justify-center border-r border-[#444] pr-[2px] leading-[13px] text-white"><span>12:19</span><span>2019/1/10</span></div>
  </div>
</div>

<!-- annotation arrow -->
<svg class="pointer-events-none absolute top-[205px] left-[455px] z-30 h-[175px] w-[350px]" viewBox="0 0 350 175" fill="none" stroke="#8a0a1c" stroke-width="4" stroke-linecap="round" stroke-linejoin="round"><path d="M342 166L180 92 10 8l30 35M10 8l38 13"/></svg>

<!-- watermark -->
<div class="absolute right-[55px] bottom-[15px] z-30 flex h-[85px] w-[180px] items-center bg-[#202e55] pl-[14px] text-[#d5d7e2]">
  <svg class="absolute bottom-full left-[77px] h-[6px] w-[30px]" viewBox="0 0 30 6" fill="#e4dcea"><circle cx="6" cy="5" r="5"/><circle cx="22" cy="6" r="5"/></svg>
  <svg class="size-9" viewBox="0 0 36 36" fill="none" stroke="currentColor" stroke-width="2.500" stroke-linecap="round" stroke-linejoin="round"><path d="M8 26V6c0-4 3-4 6-2l15 9c5 3 5 6 0 9L13 32c-6 4-11 2-11-4V8"/><path d="M8 26c0 3 2 3 4 2"/><path fill="currentColor" stroke="none" d="M14 12v10l8-5z"/><path stroke-width="1.500" d="M24 14v6"/></svg>
  <div class="ml-3 flex flex-col"><span class="text-[26px] leading-7 font-medium">溜溜自学</span><span class="font-['DejaVu_Sans',sans-serif] text-[12px] leading-[14px]">zixue.3D66.COM</span></div>
</div>

<script>
  const icon = (id, cls) => `<svg class="${cls}"><use href="#${id}"/></svg>`;

  document.querySelectorAll('[data-qat]').forEach(el => {
    el.innerHTML = el.dataset.qat.split(' ').map(id => `<button aria-label="${id}">${icon(id, id === 'tri' ? 'size-[5px]' : 'size-[13px]')}</button>`).join('');
  });

  document.querySelectorAll('[data-icons]').forEach(el => {
    el.innerHTML = el.dataset.icons.split(' ').map(id =>
      id === '|' ? '<span class="mx-[2px] h-3 w-px bg-[#999]"></span>' :
      id === '-' ? '<span class="my-[2px] h-px w-4 bg-[#bbb]"></span>' :
      `<button aria-label="${id}" class="flex h-4 w-[17px] shrink-0 items-center justify-center">${icon(id, 'size-[13px]')}</button>`).join('');
  });

  const item = (id, text, extra = '', hot = false) =>
    `<button role="menuitem" class="flex h-4 w-full items-center pl-1 ${hot ? 'bg-[#91c9f7]' : ''}"><span class="w-5">${id ? icon(id, 'size-3') : ''}</span><span>${text}</span>${extra}</button>`;
  const rule = '<div class="my-[2px] ml-5 h-px bg-[#d4d4d4]"></div>';
  const arrow = icon('chev', 'mr-[6px] ml-auto size-2 -rotate-90');
  const submenu = `<div role="menu" class="absolute -top-[2px] left-[187px] w-[143px] border border-[#d5d5d5] bg-[#f2f2f2] pt-px pr-px pb-[2px]">`
    + item('layout', '新建布局(N)') + item('layout', '来自样板的布局(T)...') + item('', '创建布局向导(W)', '', true) + '</div>';

  document.querySelector('[data-menu]').innerHTML = [
    item('insblk', '块(B)...'), item('dwg', 'DWG 参照(R)...'), item('dwf', 'DWF 参考底图(U)...'), item('dgn', 'DGN 参考底图(G)...'),
    item('pdf', 'PDF 参考底图(P)...'), item('img', '光栅图像参照(I)...'), item('field', '字段(F)...'), rule,
    item('', '点云(C)', arrow), rule,
    `<div class="relative">${item('', '布局(L)', arrow, true)}${submenu}</div>`, rule,
    item('import', '3D Studio(3)...'), item('import', 'ACIS 文件(A)...'), item('import', '二进制图形交换(E)...'), item('import', 'Windows 图元文件(W)...'), item('ole', 'OLE 对象(O)...'), rule,
    item('xref', '外部参照(N)...'), rule,
    item('hyper', '超链接(H)...', '<span class="mr-[14px] ml-auto">Ctrl+K</span>')
  ].join('');

  // Drawing grid, large enough for any window; every fifth line is a major one.
  const w = 4000, h = 2400;
  let minor = '', major = '';
  for (let k = -4; k * 8.96 + 39 < w; k++) { const x = Math.round(k * 8.96 + 39) + 0.5, d = `M${x} 0V${h}`; k % 5 ? minor += d : major += d; }
  for (let k = -5; k * 8.98 + 46 < h; k++) { const y = Math.round(k * 8.98 + 46) + 0.5, d = `M0 ${y}H${w}`; k % 5 ? minor += d : major += d; }
  document.getElementById('minor').setAttribute('d', minor);
  document.getElementById('major').setAttribute('d', major);
</script>
</body>
</html>
